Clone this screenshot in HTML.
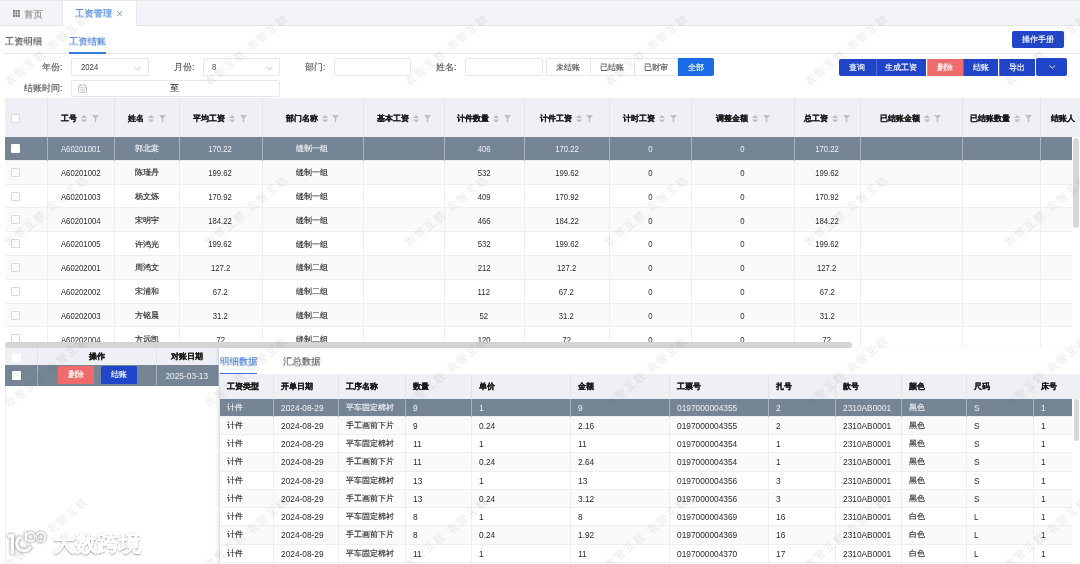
<!DOCTYPE html><html><head><meta charset="utf-8"><style>
*{margin:0;padding:0;box-sizing:border-box}
html,body{width:1080px;height:564px;overflow:hidden;background:#fff;font-family:"Liberation Sans",sans-serif;color:#333}
.a{position:absolute}
.t{position:absolute;white-space:nowrap;line-height:1;will-change:transform;-webkit-text-stroke:0.15px currentColor}
.cb{position:absolute;width:9px;height:9px;border:1px solid #d9d9d9;background:#fff;border-radius:1px}
.hb{font-weight:bold;color:#1a1a1a;-webkit-text-stroke:0.2px #1a1a1a;will-change:transform}
.n{display:inline-block;transform:scaleX(0.91)}
.nl{display:inline-block;transform:scaleX(0.86);transform-origin:0 50%;-webkit-text-stroke:0}
.n{-webkit-text-stroke:0}
</style></head><body>
<div class="a" style="left:0;top:0;width:1080px;height:25.5px;background:#f3f4f7;border-top:1px solid #e9eaee;border-bottom:1px solid #e6e8ed"></div>
<svg class="a" style="left:13px;top:10px" width="7" height="7" viewBox="0 0 7 7"><rect x="0" y="0" width="1.9" height="1.9" fill="#767676"/><rect x="0" y="2.5" width="1.9" height="1.9" fill="#767676"/><rect x="0" y="5" width="1.9" height="1.9" fill="#767676"/><rect x="2.5" y="0" width="1.9" height="1.9" fill="#767676"/><rect x="2.5" y="2.5" width="1.9" height="1.9" fill="#767676"/><rect x="2.5" y="5" width="1.9" height="1.9" fill="#767676"/><rect x="5" y="0" width="1.9" height="1.9" fill="#767676"/><rect x="5" y="2.5" width="1.9" height="1.9" fill="#767676"/><rect x="5" y="5" width="1.9" height="1.9" fill="#767676"/></svg>
<div class="t" style="left:24.3px;top:9.6px;font-size:10px;color:#888;transform:scale(0.94);transform-origin:0 0">首页</div>
<div class="a" style="left:62px;top:1px;width:75px;height:25px;background:#fff;border-left:1px solid #e8e9ee;border-right:1px solid #e8e9ee"></div>
<div class="t" style="left:75px;top:9.3px;font-size:10px;color:#3b78d8;transform:scale(0.93);transform-origin:0 0">工资管理</div>
<svg class="a" style="left:117px;top:11px" width="5.2" height="5" viewBox="0 0 5.2 5"><path d="M0.3 0.3 L4.9 4.7 M4.9 0.3 L0.3 4.7" stroke="#4a82d8" stroke-width="0.8"/></svg>
<div class="t" style="left:4.8px;top:36.5px;font-size:10px;color:#444;transform:scale(0.93);transform-origin:0 0">工资明细</div>
<div class="t" style="left:68.8px;top:36.5px;font-size:10px;color:#3b78d8;transform:scale(0.93);transform-origin:0 0">工资结账</div>
<div class="a" style="left:5px;top:53px;width:1075px;height:1px;background:#e3e5ea"></div>
<div class="a" style="left:69px;top:52px;width:37px;height:2px;background:#3b78d8"></div>
<div class="a" style="left:1012px;top:30.5px;width:52px;height:17.7px;background:#2145c8;border-radius:2px"></div>
<div class="t" style="left:1012px;top:35.5px;width:52px;text-align:center;font-size:8px;color:#fff">操作手册</div>
<div class="t" style="right:1017px;top:62.5px;font-size:9px;color:#555">年份:</div>
<div class="t" style="right:885px;top:62.5px;font-size:9px;color:#555">月份:</div>
<div class="t" style="right:754px;top:62.5px;font-size:9px;color:#555">部门:</div>
<div class="t" style="right:623px;top:62.5px;font-size:9px;color:#555">姓名:</div>
<div class="t" style="right:1017px;top:84px;font-size:9px;color:#555">结账时间:</div>
<div class="a" style="left:70.5px;top:58.3px;width:78.0px;height:18.10000000000001px;border:1px solid #e6e8ec;border-radius:2px;background:#fff"></div>
<div class="a" style="left:202.5px;top:58.3px;width:77.5px;height:18.10000000000001px;border:1px solid #e6e8ec;border-radius:2px;background:#fff"></div>
<div class="a" style="left:334px;top:58.3px;width:76.5px;height:18.10000000000001px;border:1px solid #e6e8ec;border-radius:2px;background:#fff"></div>
<div class="a" style="left:464.5px;top:58.3px;width:78.5px;height:18.10000000000001px;border:1px solid #e6e8ec;border-radius:2px;background:#fff"></div>
<div class="a" style="left:70.5px;top:79.5px;width:209.5px;height:17.799999999999997px;border:1px solid #e6e8ec;border-radius:2px;background:#fff"></div>
<div class="t" style="left:80.8px;top:63.3px;font-size:9px;color:#444"><span class="nl">2024</span></div>
<div class="t" style="left:212px;top:63.3px;font-size:9px;color:#444"><span class="nl">8</span></div>
<svg class="a" style="left:134px;top:66px" width="7" height="5" viewBox="0 0 7 5"><path d="M0.4 0.5 L3.5 4 L6.6 0.5" fill="none" stroke="#b5b5b5" stroke-width="0.7"/></svg>
<svg class="a" style="left:266px;top:66px" width="7" height="5" viewBox="0 0 7 5"><path d="M0.4 0.5 L3.5 4 L6.6 0.5" fill="none" stroke="#b5b5b5" stroke-width="0.7"/></svg>
<svg class="a" style="left:78px;top:84px" width="9" height="9" viewBox="0 0 9 9"><rect x="0.5" y="1" width="8" height="7.5" rx="0.8" fill="none" stroke="#c4c4c4" stroke-width="0.9"/><path d="M0.5 3.2 H8.5 M2.5 0 V1.8 M6.5 0 V1.8 M2 5.2 H7 M2 7 H7" stroke="#c4c4c4" stroke-width="0.8"/></svg>
<div class="t" style="left:170px;top:84.2px;font-size:9px;color:#444">至</div>
<div class="a" style="left:545.5px;top:58.4px;width:132.5px;height:18.1px;border:1px solid #e6e8ec;border-radius:2px 0 0 2px;background:#fff"></div>
<div class="t" style="left:545.5px;top:63.8px;width:44.0px;text-align:center;font-size:8px;color:#555">未结账</div>
<div class="a" style="left:589.5px;top:58.4px;width:1px;height:18.1px;background:#e6e8ec"></div>
<div class="t" style="left:589.5px;top:63.8px;width:44.200000000000045px;text-align:center;font-size:8px;color:#555">已结账</div>
<div class="a" style="left:633.7px;top:58.4px;width:1px;height:18.1px;background:#e6e8ec"></div>
<div class="t" style="left:633.7px;top:63.8px;width:43.799999999999955px;text-align:center;font-size:8px;color:#555">已财审</div>
<div class="a" style="left:677.5px;top:58.4px;width:36.5px;height:18.1px;background:#1b6ce4;border-radius:0 2px 2px 0"></div>
<div class="t" style="left:677.5px;top:63.8px;width:36.5px;text-align:center;font-size:8px;color:#fff">全部</div>
<div class="a" style="left:839.3px;top:58.7px;width:36.30000000000007px;height:17.6px;background:#2145c8;border-radius:2px 0 0 2px;"></div>
<div class="t" style="left:839.3px;top:64px;width:36.30000000000007px;text-align:center;font-size:8px;color:#fff">查询</div>
<div class="a" style="left:875.6px;top:58.7px;width:50.89999999999998px;height:17.6px;background:#2145c8;border-radius:0;border-left:1px solid rgba(255,255,255,0.22);"></div>
<div class="t" style="left:875.6px;top:64px;width:50.89999999999998px;text-align:center;font-size:8px;color:#fff">生成工资</div>
<div class="a" style="left:926.5px;top:58.7px;width:36.200000000000045px;height:17.6px;background:#f06b6b;border-radius:0;border-left:1px solid rgba(255,255,255,0.22);"></div>
<div class="t" style="left:926.5px;top:64px;width:36.200000000000045px;text-align:center;font-size:8px;color:#fff">删除</div>
<div class="a" style="left:962.7px;top:58.7px;width:35.799999999999955px;height:17.6px;background:#2145c8;border-radius:0;border-left:1px solid rgba(255,255,255,0.22);"></div>
<div class="t" style="left:962.7px;top:64px;width:35.799999999999955px;text-align:center;font-size:8px;color:#fff">结账</div>
<div class="a" style="left:998.5px;top:58.7px;width:36.5px;height:17.6px;background:#2145c8;border-radius:0;border-left:1px solid rgba(255,255,255,0.22);"></div>
<div class="t" style="left:998.5px;top:64px;width:36.5px;text-align:center;font-size:8px;color:#fff">导出</div>
<div class="a" style="left:1035.5px;top:57.8px;width:31.3px;height:17.8px;background:#2145c8;border-radius:2px"></div>
<svg class="a" style="left:1049px;top:65px" width="6.5" height="4.2" viewBox="0 0 6.5 4.2"><path d="M0.4 0.5 L3.25 3.2 L6.1 0.5" fill="none" stroke="#fff" stroke-width="0.9"/></svg>
<div class="a" style="left:5px;top:98.2px;width:1075px;height:38.8px;background:#eef0f5"></div>
<div class="a" style="left:5px;top:137.0px;width:1066.5px;height:23.8px;background:#758596;border-bottom:1px solid #eeeff1"></div>
<div class="a" style="left:5px;top:160.8px;width:1066.5px;height:23.8px;background:#fafafa;border-bottom:1px solid #eeeff1"></div>
<div class="a" style="left:5px;top:184.6px;width:1066.5px;height:23.8px;background:#fff;border-bottom:1px solid #eeeff1"></div>
<div class="a" style="left:5px;top:208.4px;width:1066.5px;height:23.8px;background:#fafafa;border-bottom:1px solid #eeeff1"></div>
<div class="a" style="left:5px;top:232.2px;width:1066.5px;height:23.8px;background:#fff;border-bottom:1px solid #eeeff1"></div>
<div class="a" style="left:5px;top:256.0px;width:1066.5px;height:23.8px;background:#fafafa;border-bottom:1px solid #eeeff1"></div>
<div class="a" style="left:5px;top:279.8px;width:1066.5px;height:23.8px;background:#fff;border-bottom:1px solid #eeeff1"></div>
<div class="a" style="left:5px;top:303.6px;width:1066.5px;height:23.8px;background:#fafafa;border-bottom:1px solid #eeeff1"></div>
<div class="a" style="left:5px;top:327.4px;width:1066.5px;height:23.8px;background:#fff;border-bottom:1px solid #eeeff1"></div>
<div class="a" style="left:47px;top:98.2px;width:1px;height:38.8px;background:#e2e5eb"></div>
<div class="a" style="left:47px;top:137.0px;width:1px;height:23.8px;background:#a9b4bf"></div>
<div class="a" style="left:47px;top:160.8px;width:1px;height:186.2px;background:#eeeff1"></div>
<div class="a" style="left:113.6px;top:98.2px;width:1px;height:38.8px;background:#e2e5eb"></div>
<div class="a" style="left:113.6px;top:137.0px;width:1px;height:23.8px;background:#a9b4bf"></div>
<div class="a" style="left:113.6px;top:160.8px;width:1px;height:186.2px;background:#eeeff1"></div>
<div class="a" style="left:179.2px;top:98.2px;width:1px;height:38.8px;background:#e2e5eb"></div>
<div class="a" style="left:179.2px;top:137.0px;width:1px;height:23.8px;background:#a9b4bf"></div>
<div class="a" style="left:179.2px;top:160.8px;width:1px;height:186.2px;background:#eeeff1"></div>
<div class="a" style="left:261.7px;top:98.2px;width:1px;height:38.8px;background:#e2e5eb"></div>
<div class="a" style="left:261.7px;top:137.0px;width:1px;height:23.8px;background:#a9b4bf"></div>
<div class="a" style="left:261.7px;top:160.8px;width:1px;height:186.2px;background:#eeeff1"></div>
<div class="a" style="left:362.5px;top:98.2px;width:1px;height:38.8px;background:#e2e5eb"></div>
<div class="a" style="left:362.5px;top:137.0px;width:1px;height:23.8px;background:#a9b4bf"></div>
<div class="a" style="left:362.5px;top:160.8px;width:1px;height:186.2px;background:#eeeff1"></div>
<div class="a" style="left:444px;top:98.2px;width:1px;height:38.8px;background:#e2e5eb"></div>
<div class="a" style="left:444px;top:137.0px;width:1px;height:23.8px;background:#a9b4bf"></div>
<div class="a" style="left:444px;top:160.8px;width:1px;height:186.2px;background:#eeeff1"></div>
<div class="a" style="left:523.8px;top:98.2px;width:1px;height:38.8px;background:#e2e5eb"></div>
<div class="a" style="left:523.8px;top:137.0px;width:1px;height:23.8px;background:#a9b4bf"></div>
<div class="a" style="left:523.8px;top:160.8px;width:1px;height:186.2px;background:#eeeff1"></div>
<div class="a" style="left:609px;top:98.2px;width:1px;height:38.8px;background:#e2e5eb"></div>
<div class="a" style="left:609px;top:137.0px;width:1px;height:23.8px;background:#a9b4bf"></div>
<div class="a" style="left:609px;top:160.8px;width:1px;height:186.2px;background:#eeeff1"></div>
<div class="a" style="left:691px;top:98.2px;width:1px;height:38.8px;background:#e2e5eb"></div>
<div class="a" style="left:691px;top:137.0px;width:1px;height:23.8px;background:#a9b4bf"></div>
<div class="a" style="left:691px;top:160.8px;width:1px;height:186.2px;background:#eeeff1"></div>
<div class="a" style="left:794.4px;top:98.2px;width:1px;height:38.8px;background:#e2e5eb"></div>
<div class="a" style="left:794.4px;top:137.0px;width:1px;height:23.8px;background:#a9b4bf"></div>
<div class="a" style="left:794.4px;top:160.8px;width:1px;height:186.2px;background:#eeeff1"></div>
<div class="a" style="left:860.2px;top:98.2px;width:1px;height:38.8px;background:#e2e5eb"></div>
<div class="a" style="left:860.2px;top:137.0px;width:1px;height:23.8px;background:#a9b4bf"></div>
<div class="a" style="left:860.2px;top:160.8px;width:1px;height:186.2px;background:#eeeff1"></div>
<div class="a" style="left:961.5px;top:98.2px;width:1px;height:38.8px;background:#e2e5eb"></div>
<div class="a" style="left:961.5px;top:137.0px;width:1px;height:23.8px;background:#a9b4bf"></div>
<div class="a" style="left:961.5px;top:160.8px;width:1px;height:186.2px;background:#eeeff1"></div>
<div class="a" style="left:1039.5px;top:98.2px;width:1px;height:38.8px;background:#e2e5eb"></div>
<div class="a" style="left:1039.5px;top:137.0px;width:1px;height:23.8px;background:#a9b4bf"></div>
<div class="a" style="left:1039.5px;top:160.8px;width:1px;height:186.2px;background:#eeeff1"></div>
<div class="cb" style="left:11.2px;top:113.8px"></div>
<div class="a hb" style="left:47px;top:99.0px;width:66.6px;height:38.8px;display:flex;align-items:center;justify-content:center;font-size:7.5px;line-height:1;white-space:nowrap">工号<svg style="margin-left:4px;flex:none" width="6.2" height="7.6" viewBox="0 0 6.2 7.6"><path d="M0 3.1 L3.1 0 L6.2 3.1Z M0 4.5 L3.1 7.6 L6.2 4.5Z" fill="#b9bdc4"/></svg><svg style="margin-left:4.5px;flex:none" width="7" height="7" viewBox="0 0 7 7"><path d="M0 0 H7 L4.2 3.2 V7 H2.8 V3.2Z" fill="#b9bdc4"/></svg></div>
<div class="a hb" style="left:113.6px;top:99.0px;width:65.6px;height:38.8px;display:flex;align-items:center;justify-content:center;font-size:7.5px;line-height:1;white-space:nowrap">姓名<svg style="margin-left:4px;flex:none" width="6.2" height="7.6" viewBox="0 0 6.2 7.6"><path d="M0 3.1 L3.1 0 L6.2 3.1Z M0 4.5 L3.1 7.6 L6.2 4.5Z" fill="#b9bdc4"/></svg><svg style="margin-left:4.5px;flex:none" width="7" height="7" viewBox="0 0 7 7"><path d="M0 0 H7 L4.2 3.2 V7 H2.8 V3.2Z" fill="#b9bdc4"/></svg></div>
<div class="a hb" style="left:179.2px;top:99.0px;width:82.5px;height:38.8px;display:flex;align-items:center;justify-content:center;font-size:7.5px;line-height:1;white-space:nowrap">平均工资<svg style="margin-left:4px;flex:none" width="6.2" height="7.6" viewBox="0 0 6.2 7.6"><path d="M0 3.1 L3.1 0 L6.2 3.1Z M0 4.5 L3.1 7.6 L6.2 4.5Z" fill="#b9bdc4"/></svg><svg style="margin-left:4.5px;flex:none" width="7" height="7" viewBox="0 0 7 7"><path d="M0 0 H7 L4.2 3.2 V7 H2.8 V3.2Z" fill="#b9bdc4"/></svg></div>
<div class="a hb" style="left:261.7px;top:99.0px;width:100.80000000000001px;height:38.8px;display:flex;align-items:center;justify-content:center;font-size:7.5px;line-height:1;white-space:nowrap">部门名称<svg style="margin-left:4px;flex:none" width="6.2" height="7.6" viewBox="0 0 6.2 7.6"><path d="M0 3.1 L3.1 0 L6.2 3.1Z M0 4.5 L3.1 7.6 L6.2 4.5Z" fill="#b9bdc4"/></svg><svg style="margin-left:4.5px;flex:none" width="7" height="7" viewBox="0 0 7 7"><path d="M0 0 H7 L4.2 3.2 V7 H2.8 V3.2Z" fill="#b9bdc4"/></svg></div>
<div class="a hb" style="left:362.5px;top:99.0px;width:81.5px;height:38.8px;display:flex;align-items:center;justify-content:center;font-size:7.5px;line-height:1;white-space:nowrap">基本工资<svg style="margin-left:4px;flex:none" width="6.2" height="7.6" viewBox="0 0 6.2 7.6"><path d="M0 3.1 L3.1 0 L6.2 3.1Z M0 4.5 L3.1 7.6 L6.2 4.5Z" fill="#b9bdc4"/></svg><svg style="margin-left:4.5px;flex:none" width="7" height="7" viewBox="0 0 7 7"><path d="M0 0 H7 L4.2 3.2 V7 H2.8 V3.2Z" fill="#b9bdc4"/></svg></div>
<div class="a hb" style="left:444px;top:99.0px;width:79.79999999999995px;height:38.8px;display:flex;align-items:center;justify-content:center;font-size:7.5px;line-height:1;white-space:nowrap">计件数量<svg style="margin-left:4px;flex:none" width="6.2" height="7.6" viewBox="0 0 6.2 7.6"><path d="M0 3.1 L3.1 0 L6.2 3.1Z M0 4.5 L3.1 7.6 L6.2 4.5Z" fill="#b9bdc4"/></svg><svg style="margin-left:4.5px;flex:none" width="7" height="7" viewBox="0 0 7 7"><path d="M0 0 H7 L4.2 3.2 V7 H2.8 V3.2Z" fill="#b9bdc4"/></svg></div>
<div class="a hb" style="left:523.8px;top:99.0px;width:85.20000000000005px;height:38.8px;display:flex;align-items:center;justify-content:center;font-size:7.5px;line-height:1;white-space:nowrap">计件工资<svg style="margin-left:4px;flex:none" width="6.2" height="7.6" viewBox="0 0 6.2 7.6"><path d="M0 3.1 L3.1 0 L6.2 3.1Z M0 4.5 L3.1 7.6 L6.2 4.5Z" fill="#b9bdc4"/></svg><svg style="margin-left:4.5px;flex:none" width="7" height="7" viewBox="0 0 7 7"><path d="M0 0 H7 L4.2 3.2 V7 H2.8 V3.2Z" fill="#b9bdc4"/></svg></div>
<div class="a hb" style="left:609px;top:99.0px;width:82px;height:38.8px;display:flex;align-items:center;justify-content:center;font-size:7.5px;line-height:1;white-space:nowrap">计时工资<svg style="margin-left:4px;flex:none" width="6.2" height="7.6" viewBox="0 0 6.2 7.6"><path d="M0 3.1 L3.1 0 L6.2 3.1Z M0 4.5 L3.1 7.6 L6.2 4.5Z" fill="#b9bdc4"/></svg><svg style="margin-left:4.5px;flex:none" width="7" height="7" viewBox="0 0 7 7"><path d="M0 0 H7 L4.2 3.2 V7 H2.8 V3.2Z" fill="#b9bdc4"/></svg></div>
<div class="a hb" style="left:691px;top:99.0px;width:103.39999999999998px;height:38.8px;display:flex;align-items:center;justify-content:center;font-size:7.5px;line-height:1;white-space:nowrap">调整金额<svg style="margin-left:4px;flex:none" width="6.2" height="7.6" viewBox="0 0 6.2 7.6"><path d="M0 3.1 L3.1 0 L6.2 3.1Z M0 4.5 L3.1 7.6 L6.2 4.5Z" fill="#b9bdc4"/></svg><svg style="margin-left:4.5px;flex:none" width="7" height="7" viewBox="0 0 7 7"><path d="M0 0 H7 L4.2 3.2 V7 H2.8 V3.2Z" fill="#b9bdc4"/></svg></div>
<div class="a hb" style="left:794.4px;top:99.0px;width:65.80000000000007px;height:38.8px;display:flex;align-items:center;justify-content:center;font-size:7.5px;line-height:1;white-space:nowrap">总工资<svg style="margin-left:4px;flex:none" width="6.2" height="7.6" viewBox="0 0 6.2 7.6"><path d="M0 3.1 L3.1 0 L6.2 3.1Z M0 4.5 L3.1 7.6 L6.2 4.5Z" fill="#b9bdc4"/></svg><svg style="margin-left:4.5px;flex:none" width="7" height="7" viewBox="0 0 7 7"><path d="M0 0 H7 L4.2 3.2 V7 H2.8 V3.2Z" fill="#b9bdc4"/></svg></div>
<div class="a hb" style="left:860.2px;top:99.0px;width:101.29999999999995px;height:38.8px;display:flex;align-items:center;justify-content:center;font-size:7.5px;line-height:1;white-space:nowrap">已结账金额<svg style="margin-left:4px;flex:none" width="6.2" height="7.6" viewBox="0 0 6.2 7.6"><path d="M0 3.1 L3.1 0 L6.2 3.1Z M0 4.5 L3.1 7.6 L6.2 4.5Z" fill="#b9bdc4"/></svg><svg style="margin-left:4.5px;flex:none" width="7" height="7" viewBox="0 0 7 7"><path d="M0 0 H7 L4.2 3.2 V7 H2.8 V3.2Z" fill="#b9bdc4"/></svg></div>
<div class="a hb" style="left:961.5px;top:99.0px;width:78.0px;height:38.8px;display:flex;align-items:center;justify-content:center;font-size:7.5px;line-height:1;white-space:nowrap">已结账数量<svg style="margin-left:4px;flex:none" width="6.2" height="7.6" viewBox="0 0 6.2 7.6"><path d="M0 3.1 L3.1 0 L6.2 3.1Z M0 4.5 L3.1 7.6 L6.2 4.5Z" fill="#b9bdc4"/></svg><svg style="margin-left:4.5px;flex:none" width="7" height="7" viewBox="0 0 7 7"><path d="M0 0 H7 L4.2 3.2 V7 H2.8 V3.2Z" fill="#b9bdc4"/></svg></div>
<div class="a hb" style="left:1039.5px;top:99.0px;width:67.0px;height:38.8px;display:flex;align-items:center;justify-content:center;font-size:7.5px;line-height:1;white-space:nowrap">结账人<svg style="margin-left:4px;flex:none" width="6.2" height="7.6" viewBox="0 0 6.2 7.6"><path d="M0 3.1 L3.1 0 L6.2 3.1Z M0 4.5 L3.1 7.6 L6.2 4.5Z" fill="#b9bdc4"/></svg><svg style="margin-left:4.5px;flex:none" width="7" height="7" viewBox="0 0 7 7"><path d="M0 0 H7 L4.2 3.2 V7 H2.8 V3.2Z" fill="#b9bdc4"/></svg></div>
<div class="cb" style="left:11.2px;top:143.9px;border-color:#fff"></div>
<div class="t" style="left:47px;top:145.2px;width:66.6px;text-align:center;font-size:8.5px;color:#eef1f4"><span class="n">A60201001</span></div>
<div class="t" style="left:113.6px;top:145.4px;width:65.6px;text-align:center;font-size:7.9px;color:#eef1f4">郭北棠</div>
<div class="t" style="left:179.2px;top:145.2px;width:82.5px;text-align:center;font-size:8.5px;color:#eef1f4"><span class="n">170.22</span></div>
<div class="t" style="left:261.7px;top:145.4px;width:100.80000000000001px;text-align:center;font-size:7.9px;color:#eef1f4">缝制一组</div>
<div class="t" style="left:444px;top:145.2px;width:79.79999999999995px;text-align:center;font-size:8.5px;color:#eef1f4"><span class="n">406</span></div>
<div class="t" style="left:523.8px;top:145.2px;width:85.20000000000005px;text-align:center;font-size:8.5px;color:#eef1f4"><span class="n">170.22</span></div>
<div class="t" style="left:609px;top:145.2px;width:82px;text-align:center;font-size:8.5px;color:#eef1f4"><span class="n">0</span></div>
<div class="t" style="left:691px;top:145.2px;width:103.39999999999998px;text-align:center;font-size:8.5px;color:#eef1f4"><span class="n">0</span></div>
<div class="t" style="left:794.4px;top:145.2px;width:65.80000000000007px;text-align:center;font-size:8.5px;color:#eef1f4"><span class="n">170.22</span></div>
<div class="cb" style="left:11.2px;top:167.70000000000002px;"></div>
<div class="t" style="left:47px;top:169.0px;width:66.6px;text-align:center;font-size:8.5px;color:#2b2b2b"><span class="n">A60201002</span></div>
<div class="t" style="left:113.6px;top:169.20000000000002px;width:65.6px;text-align:center;font-size:7.9px;color:#2b2b2b">陈瑾丹</div>
<div class="t" style="left:179.2px;top:169.0px;width:82.5px;text-align:center;font-size:8.5px;color:#2b2b2b"><span class="n">199.62</span></div>
<div class="t" style="left:261.7px;top:169.20000000000002px;width:100.80000000000001px;text-align:center;font-size:7.9px;color:#2b2b2b">缝制一组</div>
<div class="t" style="left:444px;top:169.0px;width:79.79999999999995px;text-align:center;font-size:8.5px;color:#2b2b2b"><span class="n">532</span></div>
<div class="t" style="left:523.8px;top:169.0px;width:85.20000000000005px;text-align:center;font-size:8.5px;color:#2b2b2b"><span class="n">199.62</span></div>
<div class="t" style="left:609px;top:169.0px;width:82px;text-align:center;font-size:8.5px;color:#2b2b2b"><span class="n">0</span></div>
<div class="t" style="left:691px;top:169.0px;width:103.39999999999998px;text-align:center;font-size:8.5px;color:#2b2b2b"><span class="n">0</span></div>
<div class="t" style="left:794.4px;top:169.0px;width:65.80000000000007px;text-align:center;font-size:8.5px;color:#2b2b2b"><span class="n">199.62</span></div>
<div class="cb" style="left:11.2px;top:191.5px;"></div>
<div class="t" style="left:47px;top:192.79999999999998px;width:66.6px;text-align:center;font-size:8.5px;color:#2b2b2b"><span class="n">A60201003</span></div>
<div class="t" style="left:113.6px;top:193.0px;width:65.6px;text-align:center;font-size:7.9px;color:#2b2b2b">杨文炼</div>
<div class="t" style="left:179.2px;top:192.79999999999998px;width:82.5px;text-align:center;font-size:8.5px;color:#2b2b2b"><span class="n">170.92</span></div>
<div class="t" style="left:261.7px;top:193.0px;width:100.80000000000001px;text-align:center;font-size:7.9px;color:#2b2b2b">缝制一组</div>
<div class="t" style="left:444px;top:192.79999999999998px;width:79.79999999999995px;text-align:center;font-size:8.5px;color:#2b2b2b"><span class="n">409</span></div>
<div class="t" style="left:523.8px;top:192.79999999999998px;width:85.20000000000005px;text-align:center;font-size:8.5px;color:#2b2b2b"><span class="n">170.92</span></div>
<div class="t" style="left:609px;top:192.79999999999998px;width:82px;text-align:center;font-size:8.5px;color:#2b2b2b"><span class="n">0</span></div>
<div class="t" style="left:691px;top:192.79999999999998px;width:103.39999999999998px;text-align:center;font-size:8.5px;color:#2b2b2b"><span class="n">0</span></div>
<div class="t" style="left:794.4px;top:192.79999999999998px;width:65.80000000000007px;text-align:center;font-size:8.5px;color:#2b2b2b"><span class="n">170.92</span></div>
<div class="cb" style="left:11.2px;top:215.3px;"></div>
<div class="t" style="left:47px;top:216.6px;width:66.6px;text-align:center;font-size:8.5px;color:#2b2b2b"><span class="n">A60201004</span></div>
<div class="t" style="left:113.6px;top:216.8px;width:65.6px;text-align:center;font-size:7.9px;color:#2b2b2b">宋明宇</div>
<div class="t" style="left:179.2px;top:216.6px;width:82.5px;text-align:center;font-size:8.5px;color:#2b2b2b"><span class="n">184.22</span></div>
<div class="t" style="left:261.7px;top:216.8px;width:100.80000000000001px;text-align:center;font-size:7.9px;color:#2b2b2b">缝制一组</div>
<div class="t" style="left:444px;top:216.6px;width:79.79999999999995px;text-align:center;font-size:8.5px;color:#2b2b2b"><span class="n">466</span></div>
<div class="t" style="left:523.8px;top:216.6px;width:85.20000000000005px;text-align:center;font-size:8.5px;color:#2b2b2b"><span class="n">184.22</span></div>
<div class="t" style="left:609px;top:216.6px;width:82px;text-align:center;font-size:8.5px;color:#2b2b2b"><span class="n">0</span></div>
<div class="t" style="left:691px;top:216.6px;width:103.39999999999998px;text-align:center;font-size:8.5px;color:#2b2b2b"><span class="n">0</span></div>
<div class="t" style="left:794.4px;top:216.6px;width:65.80000000000007px;text-align:center;font-size:8.5px;color:#2b2b2b"><span class="n">184.22</span></div>
<div class="cb" style="left:11.2px;top:239.1px;"></div>
<div class="t" style="left:47px;top:240.39999999999998px;width:66.6px;text-align:center;font-size:8.5px;color:#2b2b2b"><span class="n">A60201005</span></div>
<div class="t" style="left:113.6px;top:240.6px;width:65.6px;text-align:center;font-size:7.9px;color:#2b2b2b">许鸿光</div>
<div class="t" style="left:179.2px;top:240.39999999999998px;width:82.5px;text-align:center;font-size:8.5px;color:#2b2b2b"><span class="n">199.62</span></div>
<div class="t" style="left:261.7px;top:240.6px;width:100.80000000000001px;text-align:center;font-size:7.9px;color:#2b2b2b">缝制一组</div>
<div class="t" style="left:444px;top:240.39999999999998px;width:79.79999999999995px;text-align:center;font-size:8.5px;color:#2b2b2b"><span class="n">532</span></div>
<div class="t" style="left:523.8px;top:240.39999999999998px;width:85.20000000000005px;text-align:center;font-size:8.5px;color:#2b2b2b"><span class="n">199.62</span></div>
<div class="t" style="left:609px;top:240.39999999999998px;width:82px;text-align:center;font-size:8.5px;color:#2b2b2b"><span class="n">0</span></div>
<div class="t" style="left:691px;top:240.39999999999998px;width:103.39999999999998px;text-align:center;font-size:8.5px;color:#2b2b2b"><span class="n">0</span></div>
<div class="t" style="left:794.4px;top:240.39999999999998px;width:65.80000000000007px;text-align:center;font-size:8.5px;color:#2b2b2b"><span class="n">199.62</span></div>
<div class="cb" style="left:11.2px;top:262.9px;"></div>
<div class="t" style="left:47px;top:264.2px;width:66.6px;text-align:center;font-size:8.5px;color:#2b2b2b"><span class="n">A60202001</span></div>
<div class="t" style="left:113.6px;top:264.4px;width:65.6px;text-align:center;font-size:7.9px;color:#2b2b2b">周鸿文</div>
<div class="t" style="left:179.2px;top:264.2px;width:82.5px;text-align:center;font-size:8.5px;color:#2b2b2b"><span class="n">127.2</span></div>
<div class="t" style="left:261.7px;top:264.4px;width:100.80000000000001px;text-align:center;font-size:7.9px;color:#2b2b2b">缝制二组</div>
<div class="t" style="left:444px;top:264.2px;width:79.79999999999995px;text-align:center;font-size:8.5px;color:#2b2b2b"><span class="n">212</span></div>
<div class="t" style="left:523.8px;top:264.2px;width:85.20000000000005px;text-align:center;font-size:8.5px;color:#2b2b2b"><span class="n">127.2</span></div>
<div class="t" style="left:609px;top:264.2px;width:82px;text-align:center;font-size:8.5px;color:#2b2b2b"><span class="n">0</span></div>
<div class="t" style="left:691px;top:264.2px;width:103.39999999999998px;text-align:center;font-size:8.5px;color:#2b2b2b"><span class="n">0</span></div>
<div class="t" style="left:794.4px;top:264.2px;width:65.80000000000007px;text-align:center;font-size:8.5px;color:#2b2b2b"><span class="n">127.2</span></div>
<div class="cb" style="left:11.2px;top:286.7px;"></div>
<div class="t" style="left:47px;top:288.0px;width:66.6px;text-align:center;font-size:8.5px;color:#2b2b2b"><span class="n">A60202002</span></div>
<div class="t" style="left:113.6px;top:288.2px;width:65.6px;text-align:center;font-size:7.9px;color:#2b2b2b">宋浦和</div>
<div class="t" style="left:179.2px;top:288.0px;width:82.5px;text-align:center;font-size:8.5px;color:#2b2b2b"><span class="n">67.2</span></div>
<div class="t" style="left:261.7px;top:288.2px;width:100.80000000000001px;text-align:center;font-size:7.9px;color:#2b2b2b">缝制二组</div>
<div class="t" style="left:444px;top:288.0px;width:79.79999999999995px;text-align:center;font-size:8.5px;color:#2b2b2b"><span class="n">112</span></div>
<div class="t" style="left:523.8px;top:288.0px;width:85.20000000000005px;text-align:center;font-size:8.5px;color:#2b2b2b"><span class="n">67.2</span></div>
<div class="t" style="left:609px;top:288.0px;width:82px;text-align:center;font-size:8.5px;color:#2b2b2b"><span class="n">0</span></div>
<div class="t" style="left:691px;top:288.0px;width:103.39999999999998px;text-align:center;font-size:8.5px;color:#2b2b2b"><span class="n">0</span></div>
<div class="t" style="left:794.4px;top:288.0px;width:65.80000000000007px;text-align:center;font-size:8.5px;color:#2b2b2b"><span class="n">67.2</span></div>
<div class="cb" style="left:11.2px;top:310.5px;"></div>
<div class="t" style="left:47px;top:311.8px;width:66.6px;text-align:center;font-size:8.5px;color:#2b2b2b"><span class="n">A60202003</span></div>
<div class="t" style="left:113.6px;top:312.0px;width:65.6px;text-align:center;font-size:7.9px;color:#2b2b2b">方铭晨</div>
<div class="t" style="left:179.2px;top:311.8px;width:82.5px;text-align:center;font-size:8.5px;color:#2b2b2b"><span class="n">31.2</span></div>
<div class="t" style="left:261.7px;top:312.0px;width:100.80000000000001px;text-align:center;font-size:7.9px;color:#2b2b2b">缝制二组</div>
<div class="t" style="left:444px;top:311.8px;width:79.79999999999995px;text-align:center;font-size:8.5px;color:#2b2b2b"><span class="n">52</span></div>
<div class="t" style="left:523.8px;top:311.8px;width:85.20000000000005px;text-align:center;font-size:8.5px;color:#2b2b2b"><span class="n">31.2</span></div>
<div class="t" style="left:609px;top:311.8px;width:82px;text-align:center;font-size:8.5px;color:#2b2b2b"><span class="n">0</span></div>
<div class="t" style="left:691px;top:311.8px;width:103.39999999999998px;text-align:center;font-size:8.5px;color:#2b2b2b"><span class="n">0</span></div>
<div class="t" style="left:794.4px;top:311.8px;width:65.80000000000007px;text-align:center;font-size:8.5px;color:#2b2b2b"><span class="n">31.2</span></div>
<div class="cb" style="left:11.2px;top:334.29999999999995px;"></div>
<div class="t" style="left:47px;top:335.59999999999997px;width:66.6px;text-align:center;font-size:8.5px;color:#2b2b2b"><span class="n">A60202004</span></div>
<div class="t" style="left:113.6px;top:335.79999999999995px;width:65.6px;text-align:center;font-size:7.9px;color:#2b2b2b">方远凯</div>
<div class="t" style="left:179.2px;top:335.59999999999997px;width:82.5px;text-align:center;font-size:8.5px;color:#2b2b2b"><span class="n">72</span></div>
<div class="t" style="left:261.7px;top:335.79999999999995px;width:100.80000000000001px;text-align:center;font-size:7.9px;color:#2b2b2b">缝制二组</div>
<div class="t" style="left:444px;top:335.59999999999997px;width:79.79999999999995px;text-align:center;font-size:8.5px;color:#2b2b2b"><span class="n">120</span></div>
<div class="t" style="left:523.8px;top:335.59999999999997px;width:85.20000000000005px;text-align:center;font-size:8.5px;color:#2b2b2b"><span class="n">72</span></div>
<div class="t" style="left:609px;top:335.59999999999997px;width:82px;text-align:center;font-size:8.5px;color:#2b2b2b"><span class="n">0</span></div>
<div class="t" style="left:691px;top:335.59999999999997px;width:103.39999999999998px;text-align:center;font-size:8.5px;color:#2b2b2b"><span class="n">0</span></div>
<div class="t" style="left:794.4px;top:335.59999999999997px;width:65.80000000000007px;text-align:center;font-size:8.5px;color:#2b2b2b"><span class="n">72</span></div>
<div class="a" style="left:0;top:347.5px;width:1080px;height:217px;background:#fff"></div>
<div class="a" style="left:1072.7px;top:138px;width:6px;height:90px;background:#d6d6d6;border-radius:3px"></div>
<div class="a" style="left:5px;top:341.8px;width:846.7px;height:6px;background:#d4d4d4;border-radius:3px"></div>
<div class="a" style="left:5px;top:347.5px;width:214px;height:17px;background:#eef0f5"></div>
<div class="a" style="left:5px;top:364.5px;width:214px;height:21px;background:#758596"></div>
<div class="a" style="left:37px;top:347.5px;width:1px;height:17px;background:#e2e5eb"></div>
<div class="a" style="left:37px;top:364.5px;width:1px;height:21px;background:#a9b4bf"></div>
<div class="a" style="left:156.3px;top:347.5px;width:1px;height:17px;background:#e2e5eb"></div>
<div class="a" style="left:156.3px;top:364.5px;width:1px;height:21px;background:#a9b4bf"></div>
<div class="a" style="left:217.8px;top:347.5px;width:1px;height:17px;background:#e2e5eb"></div>
<div class="a" style="left:217.8px;top:364.5px;width:1px;height:21px;background:#a9b4bf"></div>
<div class="cb" style="left:12.4px;top:353px;border-color:#fff"></div>
<div class="cb" style="left:12.2px;top:370.8px;border-color:#fff"></div>
<div class="t hb" style="left:37px;top:353px;width:119px;text-align:center;font-size:8px">操作</div>
<div class="t hb" style="left:156.3px;top:353px;width:61.5px;text-align:center;font-size:8px">对账日期</div>
<div class="a" style="left:57.8px;top:366.2px;width:36.2px;height:17.8px;background:#f06b6b;border-radius:1.5px"></div>
<div class="t" style="left:57.8px;top:371px;width:36.2px;text-align:center;font-size:8px;color:#fff">删除</div>
<div class="a" style="left:101.2px;top:366.2px;width:35.8px;height:17.8px;background:#2145c8;border-radius:1.5px"></div>
<div class="t" style="left:101.2px;top:371px;width:35.8px;text-align:center;font-size:8px;color:#fff">结账</div>
<div class="t" style="left:156.3px;top:370.6px;width:61.5px;text-align:center;font-size:9.7px;color:#eef1f4"><span class="n" style="transform:scaleX(0.86)">2025-03-13</span></div>
<div class="a" style="left:219.3px;top:347.5px;width:861px;height:217px;background:#fff;box-shadow:-2px 0 3px rgba(0,0,0,0.07)"></div>
<div class="t" style="left:219.6px;top:356.6px;font-size:10px;color:#3b78d8;transform:scale(0.94);transform-origin:0 0">明细数据</div>
<div class="t" style="left:282.6px;top:356.6px;font-size:10px;color:#555;transform:scale(0.94);transform-origin:0 0">汇总数据</div>
<div class="a" style="left:220px;top:373px;width:36.5px;height:2px;background:#3b78d8"></div>
<div class="a" style="left:219.3px;top:374px;width:861px;height:24.6px;background:#eef0f5"></div>
<div class="a" style="left:219.3px;top:398.6px;width:853px;height:18.25px;background:#758596;border-bottom:1px solid #eeeff1"></div>
<div class="a" style="left:219.3px;top:416.85px;width:853px;height:18.25px;background:#fafafa;border-bottom:1px solid #eeeff1"></div>
<div class="a" style="left:219.3px;top:435.1px;width:853px;height:18.25px;background:#fff;border-bottom:1px solid #eeeff1"></div>
<div class="a" style="left:219.3px;top:453.35px;width:853px;height:18.25px;background:#fafafa;border-bottom:1px solid #eeeff1"></div>
<div class="a" style="left:219.3px;top:471.6px;width:853px;height:18.25px;background:#fff;border-bottom:1px solid #eeeff1"></div>
<div class="a" style="left:219.3px;top:489.85px;width:853px;height:18.25px;background:#fafafa;border-bottom:1px solid #eeeff1"></div>
<div class="a" style="left:219.3px;top:508.1px;width:853px;height:18.25px;background:#fff;border-bottom:1px solid #eeeff1"></div>
<div class="a" style="left:219.3px;top:526.35px;width:853px;height:18.25px;background:#fafafa;border-bottom:1px solid #eeeff1"></div>
<div class="a" style="left:219.3px;top:544.6px;width:853px;height:18.25px;background:#fff;border-bottom:1px solid #eeeff1"></div>
<div class="a" style="left:272.5px;top:374px;width:1px;height:24.6px;background:#e2e5eb"></div>
<div class="a" style="left:272.5px;top:398.6px;width:1px;height:18.25px;background:#a9b4bf"></div>
<div class="a" style="left:272.5px;top:416.85px;width:1px;height:147.14999999999998px;background:#eeeff1"></div>
<div class="a" style="left:338.3px;top:374px;width:1px;height:24.6px;background:#e2e5eb"></div>
<div class="a" style="left:338.3px;top:398.6px;width:1px;height:18.25px;background:#a9b4bf"></div>
<div class="a" style="left:338.3px;top:416.85px;width:1px;height:147.14999999999998px;background:#eeeff1"></div>
<div class="a" style="left:405.2px;top:374px;width:1px;height:24.6px;background:#e2e5eb"></div>
<div class="a" style="left:405.2px;top:398.6px;width:1px;height:18.25px;background:#a9b4bf"></div>
<div class="a" style="left:405.2px;top:416.85px;width:1px;height:147.14999999999998px;background:#eeeff1"></div>
<div class="a" style="left:470.8px;top:374px;width:1px;height:24.6px;background:#e2e5eb"></div>
<div class="a" style="left:470.8px;top:398.6px;width:1px;height:18.25px;background:#a9b4bf"></div>
<div class="a" style="left:470.8px;top:416.85px;width:1px;height:147.14999999999998px;background:#eeeff1"></div>
<div class="a" style="left:570.3px;top:374px;width:1px;height:24.6px;background:#e2e5eb"></div>
<div class="a" style="left:570.3px;top:398.6px;width:1px;height:18.25px;background:#a9b4bf"></div>
<div class="a" style="left:570.3px;top:416.85px;width:1px;height:147.14999999999998px;background:#eeeff1"></div>
<div class="a" style="left:669.4px;top:374px;width:1px;height:24.6px;background:#e2e5eb"></div>
<div class="a" style="left:669.4px;top:398.6px;width:1px;height:18.25px;background:#a9b4bf"></div>
<div class="a" style="left:669.4px;top:416.85px;width:1px;height:147.14999999999998px;background:#eeeff1"></div>
<div class="a" style="left:768.3px;top:374px;width:1px;height:24.6px;background:#e2e5eb"></div>
<div class="a" style="left:768.3px;top:398.6px;width:1px;height:18.25px;background:#a9b4bf"></div>
<div class="a" style="left:768.3px;top:416.85px;width:1px;height:147.14999999999998px;background:#eeeff1"></div>
<div class="a" style="left:834.7px;top:374px;width:1px;height:24.6px;background:#e2e5eb"></div>
<div class="a" style="left:834.7px;top:398.6px;width:1px;height:18.25px;background:#a9b4bf"></div>
<div class="a" style="left:834.7px;top:416.85px;width:1px;height:147.14999999999998px;background:#eeeff1"></div>
<div class="a" style="left:900.5px;top:374px;width:1px;height:24.6px;background:#e2e5eb"></div>
<div class="a" style="left:900.5px;top:398.6px;width:1px;height:18.25px;background:#a9b4bf"></div>
<div class="a" style="left:900.5px;top:416.85px;width:1px;height:147.14999999999998px;background:#eeeff1"></div>
<div class="a" style="left:966.4px;top:374px;width:1px;height:24.6px;background:#e2e5eb"></div>
<div class="a" style="left:966.4px;top:398.6px;width:1px;height:18.25px;background:#a9b4bf"></div>
<div class="a" style="left:966.4px;top:416.85px;width:1px;height:147.14999999999998px;background:#eeeff1"></div>
<div class="a" style="left:1032.8px;top:374px;width:1px;height:24.6px;background:#e2e5eb"></div>
<div class="a" style="left:1032.8px;top:398.6px;width:1px;height:18.25px;background:#a9b4bf"></div>
<div class="a" style="left:1032.8px;top:416.85px;width:1px;height:147.14999999999998px;background:#eeeff1"></div>
<div class="a" style="left:219.3px;top:374px;width:1px;height:190px;background:#dfe2e8"></div>
<div class="t hb" style="left:227.3px;top:383px;font-size:8px">工资类型</div>
<div class="t hb" style="left:280.5px;top:383px;font-size:8px">开单日期</div>
<div class="t hb" style="left:346.3px;top:383px;font-size:8px">工序名称</div>
<div class="t hb" style="left:413.2px;top:383px;font-size:8px">数量</div>
<div class="t hb" style="left:478.8px;top:383px;font-size:8px">单价</div>
<div class="t hb" style="left:578.3px;top:383px;font-size:8px">金额</div>
<div class="t hb" style="left:677.4px;top:383px;font-size:8px">工票号</div>
<div class="t hb" style="left:776.3px;top:383px;font-size:8px">扎号</div>
<div class="t hb" style="left:842.7px;top:383px;font-size:8px">款号</div>
<div class="t hb" style="left:908.5px;top:383px;font-size:8px">颜色</div>
<div class="t hb" style="left:974.4px;top:383px;font-size:8px">尺码</div>
<div class="t hb" style="left:1040.8px;top:383px;font-size:8px">床号</div>
<div class="t" style="left:227.3px;top:403.6px;font-size:8.2px;color:#eef1f4">计件</div>
<div class="t" style="left:280.5px;top:402.5px;font-size:9.7px;color:#eef1f4"><span class="nl">2024-08-29</span></div>
<div class="t" style="left:346.3px;top:403.6px;font-size:8.2px;color:#eef1f4">平车固定棉衬</div>
<div class="t" style="left:413.2px;top:402.5px;font-size:9.7px;color:#eef1f4"><span class="nl">9</span></div>
<div class="t" style="left:478.8px;top:402.5px;font-size:9.7px;color:#eef1f4"><span class="nl">1</span></div>
<div class="t" style="left:578.3px;top:402.5px;font-size:9.7px;color:#eef1f4"><span class="nl">9</span></div>
<div class="t" style="left:677.4px;top:402.5px;font-size:9.7px;color:#eef1f4"><span class="nl">0197000004355</span></div>
<div class="t" style="left:776.3px;top:402.5px;font-size:9.7px;color:#eef1f4"><span class="nl">2</span></div>
<div class="t" style="left:842.7px;top:402.5px;font-size:9.7px;color:#eef1f4"><span class="nl">2310AB0001</span></div>
<div class="t" style="left:908.5px;top:403.6px;font-size:8.2px;color:#eef1f4">黑色</div>
<div class="t" style="left:974.4px;top:402.5px;font-size:9.7px;color:#eef1f4"><span class="nl">S</span></div>
<div class="t" style="left:1040.8px;top:402.5px;font-size:9.7px;color:#eef1f4"><span class="nl">1</span></div>
<div class="t" style="left:227.3px;top:421.85px;font-size:8.2px;color:#2b2b2b">计件</div>
<div class="t" style="left:280.5px;top:420.75px;font-size:9.7px;color:#2b2b2b"><span class="nl">2024-08-29</span></div>
<div class="t" style="left:346.3px;top:421.85px;font-size:8.2px;color:#2b2b2b">手工画前下片</div>
<div class="t" style="left:413.2px;top:420.75px;font-size:9.7px;color:#2b2b2b"><span class="nl">9</span></div>
<div class="t" style="left:478.8px;top:420.75px;font-size:9.7px;color:#2b2b2b"><span class="nl">0.24</span></div>
<div class="t" style="left:578.3px;top:420.75px;font-size:9.7px;color:#2b2b2b"><span class="nl">2.16</span></div>
<div class="t" style="left:677.4px;top:420.75px;font-size:9.7px;color:#2b2b2b"><span class="nl">0197000004355</span></div>
<div class="t" style="left:776.3px;top:420.75px;font-size:9.7px;color:#2b2b2b"><span class="nl">2</span></div>
<div class="t" style="left:842.7px;top:420.75px;font-size:9.7px;color:#2b2b2b"><span class="nl">2310AB0001</span></div>
<div class="t" style="left:908.5px;top:421.85px;font-size:8.2px;color:#2b2b2b">黑色</div>
<div class="t" style="left:974.4px;top:420.75px;font-size:9.7px;color:#2b2b2b"><span class="nl">S</span></div>
<div class="t" style="left:1040.8px;top:420.75px;font-size:9.7px;color:#2b2b2b"><span class="nl">1</span></div>
<div class="t" style="left:227.3px;top:440.1px;font-size:8.2px;color:#2b2b2b">计件</div>
<div class="t" style="left:280.5px;top:439.0px;font-size:9.7px;color:#2b2b2b"><span class="nl">2024-08-29</span></div>
<div class="t" style="left:346.3px;top:440.1px;font-size:8.2px;color:#2b2b2b">平车固定棉衬</div>
<div class="t" style="left:413.2px;top:439.0px;font-size:9.7px;color:#2b2b2b"><span class="nl">11</span></div>
<div class="t" style="left:478.8px;top:439.0px;font-size:9.7px;color:#2b2b2b"><span class="nl">1</span></div>
<div class="t" style="left:578.3px;top:439.0px;font-size:9.7px;color:#2b2b2b"><span class="nl">11</span></div>
<div class="t" style="left:677.4px;top:439.0px;font-size:9.7px;color:#2b2b2b"><span class="nl">0197000004354</span></div>
<div class="t" style="left:776.3px;top:439.0px;font-size:9.7px;color:#2b2b2b"><span class="nl">1</span></div>
<div class="t" style="left:842.7px;top:439.0px;font-size:9.7px;color:#2b2b2b"><span class="nl">2310AB0001</span></div>
<div class="t" style="left:908.5px;top:440.1px;font-size:8.2px;color:#2b2b2b">黑色</div>
<div class="t" style="left:974.4px;top:439.0px;font-size:9.7px;color:#2b2b2b"><span class="nl">S</span></div>
<div class="t" style="left:1040.8px;top:439.0px;font-size:9.7px;color:#2b2b2b"><span class="nl">1</span></div>
<div class="t" style="left:227.3px;top:458.35px;font-size:8.2px;color:#2b2b2b">计件</div>
<div class="t" style="left:280.5px;top:457.25px;font-size:9.7px;color:#2b2b2b"><span class="nl">2024-08-29</span></div>
<div class="t" style="left:346.3px;top:458.35px;font-size:8.2px;color:#2b2b2b">手工画前下片</div>
<div class="t" style="left:413.2px;top:457.25px;font-size:9.7px;color:#2b2b2b"><span class="nl">11</span></div>
<div class="t" style="left:478.8px;top:457.25px;font-size:9.7px;color:#2b2b2b"><span class="nl">0.24</span></div>
<div class="t" style="left:578.3px;top:457.25px;font-size:9.7px;color:#2b2b2b"><span class="nl">2.64</span></div>
<div class="t" style="left:677.4px;top:457.25px;font-size:9.7px;color:#2b2b2b"><span class="nl">0197000004354</span></div>
<div class="t" style="left:776.3px;top:457.25px;font-size:9.7px;color:#2b2b2b"><span class="nl">1</span></div>
<div class="t" style="left:842.7px;top:457.25px;font-size:9.7px;color:#2b2b2b"><span class="nl">2310AB0001</span></div>
<div class="t" style="left:908.5px;top:458.35px;font-size:8.2px;color:#2b2b2b">黑色</div>
<div class="t" style="left:974.4px;top:457.25px;font-size:9.7px;color:#2b2b2b"><span class="nl">S</span></div>
<div class="t" style="left:1040.8px;top:457.25px;font-size:9.7px;color:#2b2b2b"><span class="nl">1</span></div>
<div class="t" style="left:227.3px;top:476.6px;font-size:8.2px;color:#2b2b2b">计件</div>
<div class="t" style="left:280.5px;top:475.5px;font-size:9.7px;color:#2b2b2b"><span class="nl">2024-08-29</span></div>
<div class="t" style="left:346.3px;top:476.6px;font-size:8.2px;color:#2b2b2b">平车固定棉衬</div>
<div class="t" style="left:413.2px;top:475.5px;font-size:9.7px;color:#2b2b2b"><span class="nl">13</span></div>
<div class="t" style="left:478.8px;top:475.5px;font-size:9.7px;color:#2b2b2b"><span class="nl">1</span></div>
<div class="t" style="left:578.3px;top:475.5px;font-size:9.7px;color:#2b2b2b"><span class="nl">13</span></div>
<div class="t" style="left:677.4px;top:475.5px;font-size:9.7px;color:#2b2b2b"><span class="nl">0197000004356</span></div>
<div class="t" style="left:776.3px;top:475.5px;font-size:9.7px;color:#2b2b2b"><span class="nl">3</span></div>
<div class="t" style="left:842.7px;top:475.5px;font-size:9.7px;color:#2b2b2b"><span class="nl">2310AB0001</span></div>
<div class="t" style="left:908.5px;top:476.6px;font-size:8.2px;color:#2b2b2b">黑色</div>
<div class="t" style="left:974.4px;top:475.5px;font-size:9.7px;color:#2b2b2b"><span class="nl">S</span></div>
<div class="t" style="left:1040.8px;top:475.5px;font-size:9.7px;color:#2b2b2b"><span class="nl">1</span></div>
<div class="t" style="left:227.3px;top:494.85px;font-size:8.2px;color:#2b2b2b">计件</div>
<div class="t" style="left:280.5px;top:493.75px;font-size:9.7px;color:#2b2b2b"><span class="nl">2024-08-29</span></div>
<div class="t" style="left:346.3px;top:494.85px;font-size:8.2px;color:#2b2b2b">手工画前下片</div>
<div class="t" style="left:413.2px;top:493.75px;font-size:9.7px;color:#2b2b2b"><span class="nl">13</span></div>
<div class="t" style="left:478.8px;top:493.75px;font-size:9.7px;color:#2b2b2b"><span class="nl">0.24</span></div>
<div class="t" style="left:578.3px;top:493.75px;font-size:9.7px;color:#2b2b2b"><span class="nl">3.12</span></div>
<div class="t" style="left:677.4px;top:493.75px;font-size:9.7px;color:#2b2b2b"><span class="nl">0197000004356</span></div>
<div class="t" style="left:776.3px;top:493.75px;font-size:9.7px;color:#2b2b2b"><span class="nl">3</span></div>
<div class="t" style="left:842.7px;top:493.75px;font-size:9.7px;color:#2b2b2b"><span class="nl">2310AB0001</span></div>
<div class="t" style="left:908.5px;top:494.85px;font-size:8.2px;color:#2b2b2b">黑色</div>
<div class="t" style="left:974.4px;top:493.75px;font-size:9.7px;color:#2b2b2b"><span class="nl">S</span></div>
<div class="t" style="left:1040.8px;top:493.75px;font-size:9.7px;color:#2b2b2b"><span class="nl">1</span></div>
<div class="t" style="left:227.3px;top:513.1px;font-size:8.2px;color:#2b2b2b">计件</div>
<div class="t" style="left:280.5px;top:512.0px;font-size:9.7px;color:#2b2b2b"><span class="nl">2024-08-29</span></div>
<div class="t" style="left:346.3px;top:513.1px;font-size:8.2px;color:#2b2b2b">平车固定棉衬</div>
<div class="t" style="left:413.2px;top:512.0px;font-size:9.7px;color:#2b2b2b"><span class="nl">8</span></div>
<div class="t" style="left:478.8px;top:512.0px;font-size:9.7px;color:#2b2b2b"><span class="nl">1</span></div>
<div class="t" style="left:578.3px;top:512.0px;font-size:9.7px;color:#2b2b2b"><span class="nl">8</span></div>
<div class="t" style="left:677.4px;top:512.0px;font-size:9.7px;color:#2b2b2b"><span class="nl">0197000004369</span></div>
<div class="t" style="left:776.3px;top:512.0px;font-size:9.7px;color:#2b2b2b"><span class="nl">16</span></div>
<div class="t" style="left:842.7px;top:512.0px;font-size:9.7px;color:#2b2b2b"><span class="nl">2310AB0001</span></div>
<div class="t" style="left:908.5px;top:513.1px;font-size:8.2px;color:#2b2b2b">白色</div>
<div class="t" style="left:974.4px;top:512.0px;font-size:9.7px;color:#2b2b2b"><span class="nl">L</span></div>
<div class="t" style="left:1040.8px;top:512.0px;font-size:9.7px;color:#2b2b2b"><span class="nl">1</span></div>
<div class="t" style="left:227.3px;top:531.35px;font-size:8.2px;color:#2b2b2b">计件</div>
<div class="t" style="left:280.5px;top:530.25px;font-size:9.7px;color:#2b2b2b"><span class="nl">2024-08-29</span></div>
<div class="t" style="left:346.3px;top:531.35px;font-size:8.2px;color:#2b2b2b">手工画前下片</div>
<div class="t" style="left:413.2px;top:530.25px;font-size:9.7px;color:#2b2b2b"><span class="nl">8</span></div>
<div class="t" style="left:478.8px;top:530.25px;font-size:9.7px;color:#2b2b2b"><span class="nl">0.24</span></div>
<div class="t" style="left:578.3px;top:530.25px;font-size:9.7px;color:#2b2b2b"><span class="nl">1.92</span></div>
<div class="t" style="left:677.4px;top:530.25px;font-size:9.7px;color:#2b2b2b"><span class="nl">0197000004369</span></div>
<div class="t" style="left:776.3px;top:530.25px;font-size:9.7px;color:#2b2b2b"><span class="nl">16</span></div>
<div class="t" style="left:842.7px;top:530.25px;font-size:9.7px;color:#2b2b2b"><span class="nl">2310AB0001</span></div>
<div class="t" style="left:908.5px;top:531.35px;font-size:8.2px;color:#2b2b2b">白色</div>
<div class="t" style="left:974.4px;top:530.25px;font-size:9.7px;color:#2b2b2b"><span class="nl">L</span></div>
<div class="t" style="left:1040.8px;top:530.25px;font-size:9.7px;color:#2b2b2b"><span class="nl">1</span></div>
<div class="t" style="left:227.3px;top:549.6px;font-size:8.2px;color:#2b2b2b">计件</div>
<div class="t" style="left:280.5px;top:548.5px;font-size:9.7px;color:#2b2b2b"><span class="nl">2024-08-29</span></div>
<div class="t" style="left:346.3px;top:549.6px;font-size:8.2px;color:#2b2b2b">平车固定棉衬</div>
<div class="t" style="left:413.2px;top:548.5px;font-size:9.7px;color:#2b2b2b"><span class="nl">11</span></div>
<div class="t" style="left:478.8px;top:548.5px;font-size:9.7px;color:#2b2b2b"><span class="nl">1</span></div>
<div class="t" style="left:578.3px;top:548.5px;font-size:9.7px;color:#2b2b2b"><span class="nl">11</span></div>
<div class="t" style="left:677.4px;top:548.5px;font-size:9.7px;color:#2b2b2b"><span class="nl">0197000004370</span></div>
<div class="t" style="left:776.3px;top:548.5px;font-size:9.7px;color:#2b2b2b"><span class="nl">17</span></div>
<div class="t" style="left:842.7px;top:548.5px;font-size:9.7px;color:#2b2b2b"><span class="nl">2310AB0001</span></div>
<div class="t" style="left:908.5px;top:549.6px;font-size:8.2px;color:#2b2b2b">白色</div>
<div class="t" style="left:974.4px;top:548.5px;font-size:9.7px;color:#2b2b2b"><span class="nl">L</span></div>
<div class="t" style="left:1040.8px;top:548.5px;font-size:9.7px;color:#2b2b2b"><span class="nl">1</span></div>
<div class="a" style="left:1074px;top:399.3px;width:5px;height:42px;background:#d6d6d6;border-radius:2.5px"></div>
<div class="a" style="left:4.5px;top:385.5px;width:1px;height:179px;background:#eeeff1"></div>
<svg class="a" style="left:4px;top:526px;filter:drop-shadow(0 0.5px 1.6px rgba(0,0,0,0.55))" width="46" height="34" viewBox="0 0 46 34"><g fill="none" stroke="#fff"><path d="M8.4 8.5 L4 11 M8.4 8 V28.3" stroke-width="3.4"/><path d="M16.8 10.8 A7.3 7.3 0 1 0 26.5 20.5" stroke-width="3"/><path d="M21.5 5.4 V16.3" stroke-width="1.6"/><circle cx="26.5" cy="10.9" r="4.3" stroke-width="1.7"/><circle cx="36.8" cy="10.9" r="4.5" stroke-width="1.7"/></g></svg>
<div class="t" style="left:52.5px;top:534px;font-size:21.5px;font-weight:bold;color:#fff;-webkit-text-stroke:0.6px #fff;text-shadow:0 0.5px 2px rgba(0,0,0,0.45),0 0 1.2px rgba(0,0,0,0.35)">大数跨境</div>
<div class="a" style="left:-190.4px;top:77px;font-size:10.5px;line-height:11px;white-space:nowrap;color:rgba(90,90,90,0.065);transform-origin:0 100%;transform:rotate(-40deg);letter-spacing:1.6px;-webkit-text-stroke:0.5px rgba(90,90,90,0.06)">衣智互联 衣智互联</div>
<div class="a" style="left:-190.4px;top:238px;font-size:10.5px;line-height:11px;white-space:nowrap;color:rgba(90,90,90,0.065);transform-origin:0 100%;transform:rotate(-40deg);letter-spacing:1.6px;-webkit-text-stroke:0.5px rgba(90,90,90,0.06)">衣智互联 衣智互联</div>
<div class="a" style="left:-190.4px;top:399px;font-size:10.5px;line-height:11px;white-space:nowrap;color:rgba(90,90,90,0.065);transform-origin:0 100%;transform:rotate(-40deg);letter-spacing:1.6px;-webkit-text-stroke:0.5px rgba(90,90,90,0.06)">衣智互联 衣智互联</div>
<div class="a" style="left:-190.4px;top:560px;font-size:10.5px;line-height:11px;white-space:nowrap;color:rgba(90,90,90,0.065);transform-origin:0 100%;transform:rotate(-40deg);letter-spacing:1.6px;-webkit-text-stroke:0.5px rgba(90,90,90,0.06)">衣智互联 衣智互联</div>
<div class="a" style="left:9.6px;top:77px;font-size:10.5px;line-height:11px;white-space:nowrap;color:rgba(90,90,90,0.065);transform-origin:0 100%;transform:rotate(-40deg);letter-spacing:1.6px;-webkit-text-stroke:0.5px rgba(90,90,90,0.06)">衣智互联 衣智互联</div>
<div class="a" style="left:9.6px;top:238px;font-size:10.5px;line-height:11px;white-space:nowrap;color:rgba(90,90,90,0.065);transform-origin:0 100%;transform:rotate(-40deg);letter-spacing:1.6px;-webkit-text-stroke:0.5px rgba(90,90,90,0.06)">衣智互联 衣智互联</div>
<div class="a" style="left:9.6px;top:399px;font-size:10.5px;line-height:11px;white-space:nowrap;color:rgba(90,90,90,0.065);transform-origin:0 100%;transform:rotate(-40deg);letter-spacing:1.6px;-webkit-text-stroke:0.5px rgba(90,90,90,0.06)">衣智互联 衣智互联</div>
<div class="a" style="left:9.6px;top:560px;font-size:10.5px;line-height:11px;white-space:nowrap;color:rgba(90,90,90,0.065);transform-origin:0 100%;transform:rotate(-40deg);letter-spacing:1.6px;-webkit-text-stroke:0.5px rgba(90,90,90,0.06)">衣智互联 衣智互联</div>
<div class="a" style="left:209.6px;top:77px;font-size:10.5px;line-height:11px;white-space:nowrap;color:rgba(90,90,90,0.065);transform-origin:0 100%;transform:rotate(-40deg);letter-spacing:1.6px;-webkit-text-stroke:0.5px rgba(90,90,90,0.06)">衣智互联 衣智互联</div>
<div class="a" style="left:209.6px;top:238px;font-size:10.5px;line-height:11px;white-space:nowrap;color:rgba(90,90,90,0.065);transform-origin:0 100%;transform:rotate(-40deg);letter-spacing:1.6px;-webkit-text-stroke:0.5px rgba(90,90,90,0.06)">衣智互联 衣智互联</div>
<div class="a" style="left:209.6px;top:399px;font-size:10.5px;line-height:11px;white-space:nowrap;color:rgba(90,90,90,0.065);transform-origin:0 100%;transform:rotate(-40deg);letter-spacing:1.6px;-webkit-text-stroke:0.5px rgba(90,90,90,0.06)">衣智互联 衣智互联</div>
<div class="a" style="left:209.6px;top:560px;font-size:10.5px;line-height:11px;white-space:nowrap;color:rgba(90,90,90,0.065);transform-origin:0 100%;transform:rotate(-40deg);letter-spacing:1.6px;-webkit-text-stroke:0.5px rgba(90,90,90,0.06)">衣智互联 衣智互联</div>
<div class="a" style="left:409.6px;top:77px;font-size:10.5px;line-height:11px;white-space:nowrap;color:rgba(90,90,90,0.065);transform-origin:0 100%;transform:rotate(-40deg);letter-spacing:1.6px;-webkit-text-stroke:0.5px rgba(90,90,90,0.06)">衣智互联 衣智互联</div>
<div class="a" style="left:409.6px;top:238px;font-size:10.5px;line-height:11px;white-space:nowrap;color:rgba(90,90,90,0.065);transform-origin:0 100%;transform:rotate(-40deg);letter-spacing:1.6px;-webkit-text-stroke:0.5px rgba(90,90,90,0.06)">衣智互联 衣智互联</div>
<div class="a" style="left:409.6px;top:399px;font-size:10.5px;line-height:11px;white-space:nowrap;color:rgba(90,90,90,0.065);transform-origin:0 100%;transform:rotate(-40deg);letter-spacing:1.6px;-webkit-text-stroke:0.5px rgba(90,90,90,0.06)">衣智互联 衣智互联</div>
<div class="a" style="left:409.6px;top:560px;font-size:10.5px;line-height:11px;white-space:nowrap;color:rgba(90,90,90,0.065);transform-origin:0 100%;transform:rotate(-40deg);letter-spacing:1.6px;-webkit-text-stroke:0.5px rgba(90,90,90,0.06)">衣智互联 衣智互联</div>
<div class="a" style="left:609.6px;top:77px;font-size:10.5px;line-height:11px;white-space:nowrap;color:rgba(90,90,90,0.065);transform-origin:0 100%;transform:rotate(-40deg);letter-spacing:1.6px;-webkit-text-stroke:0.5px rgba(90,90,90,0.06)">衣智互联 衣智互联</div>
<div class="a" style="left:609.6px;top:238px;font-size:10.5px;line-height:11px;white-space:nowrap;color:rgba(90,90,90,0.065);transform-origin:0 100%;transform:rotate(-40deg);letter-spacing:1.6px;-webkit-text-stroke:0.5px rgba(90,90,90,0.06)">衣智互联 衣智互联</div>
<div class="a" style="left:609.6px;top:399px;font-size:10.5px;line-height:11px;white-space:nowrap;color:rgba(90,90,90,0.065);transform-origin:0 100%;transform:rotate(-40deg);letter-spacing:1.6px;-webkit-text-stroke:0.5px rgba(90,90,90,0.06)">衣智互联 衣智互联</div>
<div class="a" style="left:609.6px;top:560px;font-size:10.5px;line-height:11px;white-space:nowrap;color:rgba(90,90,90,0.065);transform-origin:0 100%;transform:rotate(-40deg);letter-spacing:1.6px;-webkit-text-stroke:0.5px rgba(90,90,90,0.06)">衣智互联 衣智互联</div>
<div class="a" style="left:809.6px;top:77px;font-size:10.5px;line-height:11px;white-space:nowrap;color:rgba(90,90,90,0.065);transform-origin:0 100%;transform:rotate(-40deg);letter-spacing:1.6px;-webkit-text-stroke:0.5px rgba(90,90,90,0.06)">衣智互联 衣智互联</div>
<div class="a" style="left:809.6px;top:238px;font-size:10.5px;line-height:11px;white-space:nowrap;color:rgba(90,90,90,0.065);transform-origin:0 100%;transform:rotate(-40deg);letter-spacing:1.6px;-webkit-text-stroke:0.5px rgba(90,90,90,0.06)">衣智互联 衣智互联</div>
<div class="a" style="left:809.6px;top:399px;font-size:10.5px;line-height:11px;white-space:nowrap;color:rgba(90,90,90,0.065);transform-origin:0 100%;transform:rotate(-40deg);letter-spacing:1.6px;-webkit-text-stroke:0.5px rgba(90,90,90,0.06)">衣智互联 衣智互联</div>
<div class="a" style="left:809.6px;top:560px;font-size:10.5px;line-height:11px;white-space:nowrap;color:rgba(90,90,90,0.065);transform-origin:0 100%;transform:rotate(-40deg);letter-spacing:1.6px;-webkit-text-stroke:0.5px rgba(90,90,90,0.06)">衣智互联 衣智互联</div>
<div class="a" style="left:1009.6px;top:77px;font-size:10.5px;line-height:11px;white-space:nowrap;color:rgba(90,90,90,0.065);transform-origin:0 100%;transform:rotate(-40deg);letter-spacing:1.6px;-webkit-text-stroke:0.5px rgba(90,90,90,0.06)">衣智互联 衣智互联</div>
<div class="a" style="left:1009.6px;top:238px;font-size:10.5px;line-height:11px;white-space:nowrap;color:rgba(90,90,90,0.065);transform-origin:0 100%;transform:rotate(-40deg);letter-spacing:1.6px;-webkit-text-stroke:0.5px rgba(90,90,90,0.06)">衣智互联 衣智互联</div>
<div class="a" style="left:1009.6px;top:399px;font-size:10.5px;line-height:11px;white-space:nowrap;color:rgba(90,90,90,0.065);transform-origin:0 100%;transform:rotate(-40deg);letter-spacing:1.6px;-webkit-text-stroke:0.5px rgba(90,90,90,0.06)">衣智互联 衣智互联</div>
<div class="a" style="left:1009.6px;top:560px;font-size:10.5px;line-height:11px;white-space:nowrap;color:rgba(90,90,90,0.065);transform-origin:0 100%;transform:rotate(-40deg);letter-spacing:1.6px;-webkit-text-stroke:0.5px rgba(90,90,90,0.06)">衣智互联 衣智互联</div>
</body></html>
